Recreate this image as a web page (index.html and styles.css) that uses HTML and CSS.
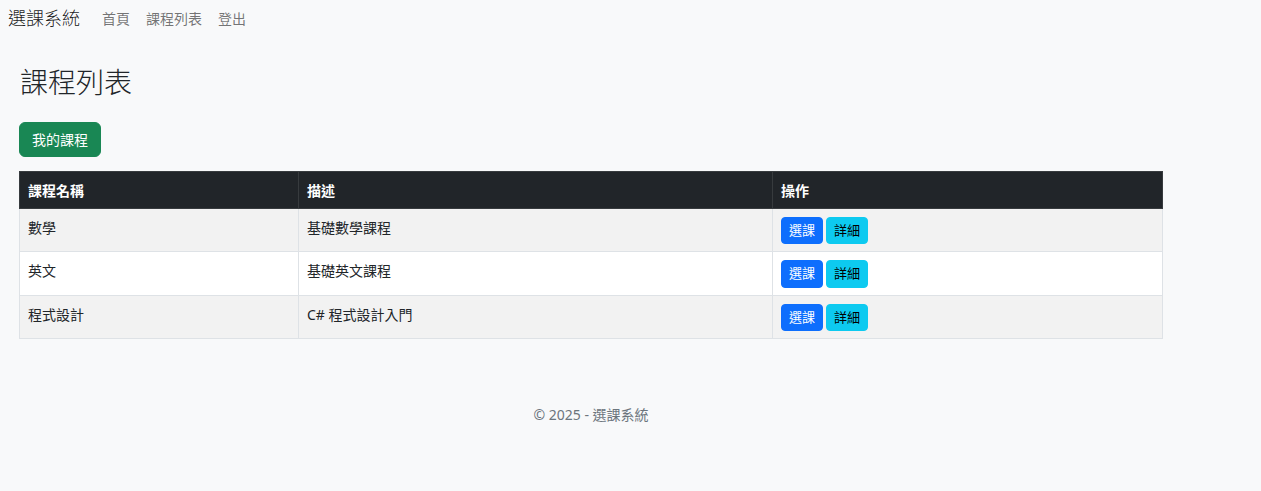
FILE: index.html
```html
<!DOCTYPE html>
<html lang="zh-Hant">
<head>
<meta charset="utf-8">
<title>課程列表 - 選課系統</title>
<link rel="stylesheet" href="styles.css">
</head>
<body>
<nav class="navbar">
  <a class="brand" href="#">選課系統</a>
  <ul class="nav">
    <li><a class="nav-link" href="#">首頁</a></li>
    <li><a class="nav-link" href="#">課程列表</a></li>
    <li><a class="nav-link" href="#">登出</a></li>
  </ul>
</nav>
<main class="page">
  <h2 class="title">課程列表</h2>
  <div class="actions"><a class="btn btn-success" href="#">我的課程</a></div>
  <table class="table">
    <colgroup>
      <col class="c1"><col class="c2"><col class="c3">
    </colgroup>
    <thead>
      <tr><th>課程名稱</th><th>描述</th><th>操作</th></tr>
    </thead>
    <tbody>
      <tr class="odd"><td>數學</td><td>基礎數學課程</td><td><div class="btns"><a class="btn-sm btn-primary" href="#">選課</a><a class="btn-sm btn-info" href="#">詳細</a></div></td></tr>
      <tr><td>英文</td><td>基礎英文課程</td><td><div class="btns"><a class="btn-sm btn-primary" href="#">選課</a><a class="btn-sm btn-info" href="#">詳細</a></div></td></tr>
      <tr class="odd"><td>程式設計</td><td>C# 程式設計入門</td><td><div class="btns"><a class="btn-sm btn-primary" href="#">選課</a><a class="btn-sm btn-info" href="#">詳細</a></div></td></tr>
    </tbody>
  </table>
  <footer class="footer">© 2025 - 選課系統</footer>
</main>
</body>
</html>
```
FILE: styles.css
```css
* { box-sizing: border-box; }
html, body { margin: 0; padding: 0; }
body {
  background: #f8f9fa;
  color: #212529;
  font-family: "Noto Sans", "Noto Sans CJK TC", sans-serif;
  font-size: 14px;
  line-height: 1.5;
}
a { text-decoration: none; }
.navbar {
  display: flex;
  align-items: center;
  height: 37px;
  padding: 0 8px;
}
.brand {
  font-size: 18px;
  font-weight: 300;
  color: rgba(0,0,0,.9);
  margin-right: 14px;
  line-height: 1.5;
}
.nav {
  display: flex;
  list-style: none;
  margin: 0;
  padding: 0;
}
.nav-link {
  display: block;
  padding: 0 8px;
  color: rgba(0,0,0,.55);
  font-size: 14px;
}
.page {
  width: 1144px;
  margin-left: 19px;
  padding-top: 29px;
}
.title {
  font-size: 28px;
  font-weight: 300;
  line-height: 1.2;
  margin: 0 0 22px 1px;
}
.actions { display: flex; }
.btn {
  display: inline-block;
  padding: 6px 12px;
  font-size: 14px;
  line-height: 21px;
  border: 1px solid transparent;
  border-radius: 6px;
}
.btn-success { background: #198754; border-color: #198754; color: #fff; }
.table {
  width: 100%;
  margin-top: 14px;
  border-collapse: collapse;
  background: #fff;
  vertical-align: top;
}
.c1 { width: 279px; }
.c2 { width: 474px; }
.table th, .table td {
  border: 1px solid #dee2e6;
  padding: 8px 8px 7px;
  text-align: left;
  vertical-align: top;
}
.table thead th {
  background: #212529;
  color: #fff;
  font-weight: 700;
  border-color: #373b3e;
}
.table tr.odd td { background: #f2f2f2; }
.btns { display: flex; gap: 3px; }
.btn-sm {
  display: inline-block;
  padding: 3px 7px;
  font-size: 13px;
  line-height: 19.5px;
  border: 1px solid transparent;
  border-radius: 4px;
}
.btn-primary { background: #0d6efd; border-color: #0d6efd; color: #fff; }
.btn-info { background: #0dcaf0; border-color: #0dcaf0; color: #000; }
.footer {
  margin-top: 65px;
  text-align: center;
  color: #6c757d;
  line-height: 21px;
}
```
